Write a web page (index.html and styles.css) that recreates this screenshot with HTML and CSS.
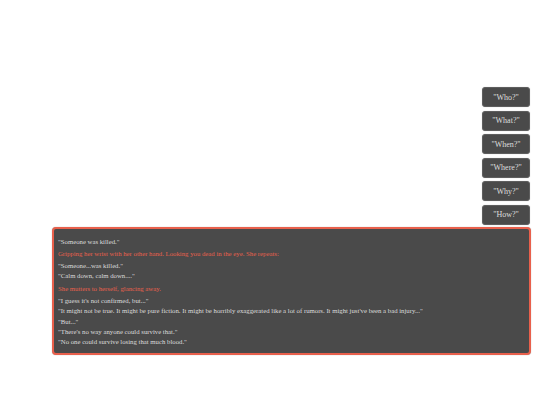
FILE: index.html
```html
<!DOCTYPE html>
<html>
<head>
<meta charset="utf-8">
<link rel="stylesheet" href="styles.css">
</head>
<body>
<div class="page">
  <div class="choices">
    <div class="choice">"Who?"</div>
    <div class="choice">"What?"</div>
    <div class="choice">"When?"</div>
    <div class="choice">"Where?"</div>
    <div class="choice">"Why?"</div>
    <div class="choice">"How?"</div>
  </div>
  <div class="dialog">
    <p class="line">"Someone was killed."</p>
    <p class="line action">Gripping her wrist with her other hand. Looking you dead in the eye. She repeats:</p>
    <p class="line">"Someone...was killed."</p>
    <p class="line">"Calm down, calm down...."</p>
    <p class="line action">She mutters to herself, glancing away.</p>
    <p class="line">"I guess it's not confirmed, but..."</p>
    <p class="line">"It might not be true. It might be pure fiction. It might be horribly exaggerated like a lot of rumors. It might just've been a bad injury..."</p>
    <p class="line">"But..."</p>
    <p class="line">"There's no way anyone could survive that."</p>
    <p class="line">"No one could survive losing that much blood."</p>
  </div>
</div>
</body>
</html>
```
FILE: styles.css
```css
html, body {
  margin: 0;
  padding: 0;
  background: #ffffff;
}
.page {
  width: 540px;
  height: 405px;
  padding-top: 87px;
  box-sizing: border-box;
  font-family: "Liberation Serif", "Times New Roman", serif;
}
.choices {
  display: flex;
  flex-direction: column;
  align-items: flex-end;
  gap: 3.5px;
  padding-right: 10px;
}
.choice {
  width: 48px;
  height: 20px;
  box-sizing: border-box;
  background: #4a4a4a;
  border: 1px solid #5e5e5e;
  border-radius: 3px;
  color: #dedede;
  font-size: 8px;
  display: flex;
  align-items: center;
  justify-content: center;
  box-shadow: 0 0 1px rgba(0,0,0,0.3);
}
.dialog {
  margin: 2px 9px 0 52px;
  height: 128px;
  box-sizing: border-box;
  background: #4a4a4a;
  border: 2px solid #e8604c;
  border-radius: 4px;
  padding: 8px 4px 0 4px;
  color: #dcdcdc;
  font-size: 6.75px;
  box-shadow: 0 0 1px rgba(0,0,0,0.4);
}
.line {
  margin: 0;
  line-height: 10.4px;
}
.action {
  color: #e8604c;
  margin: 1.8px 0;
}
```
